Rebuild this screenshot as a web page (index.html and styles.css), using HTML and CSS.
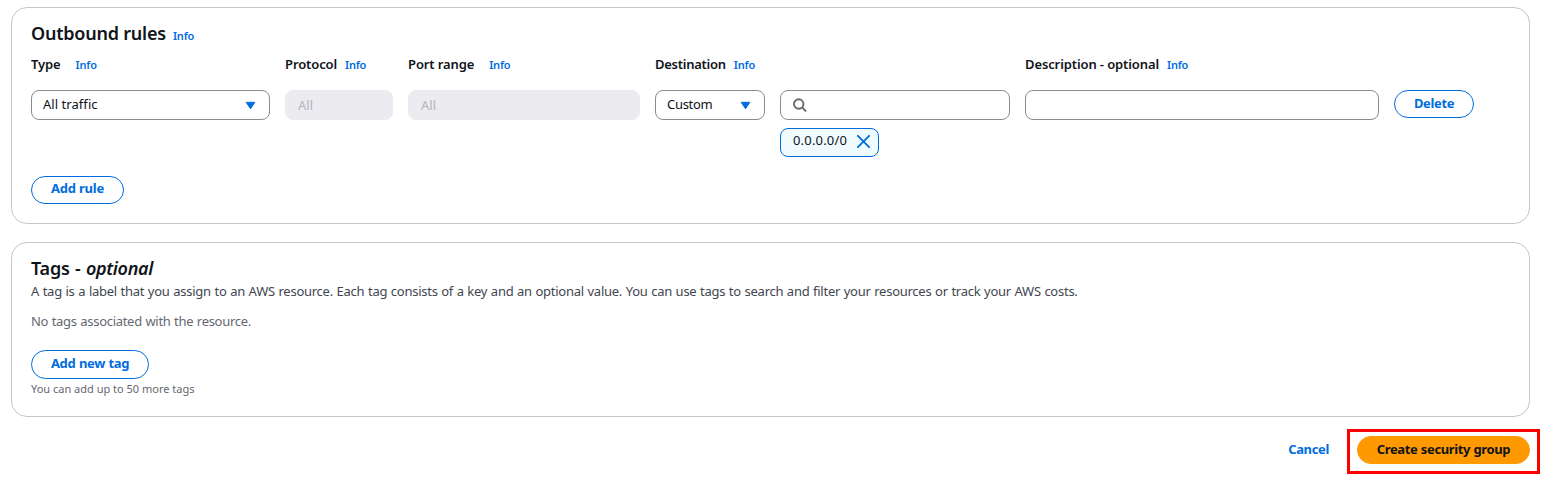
FILE: index.html
```
<!DOCTYPE html>
<html lang="en">
<head>
<meta charset="utf-8">
<title>Create security group</title>
<link rel="stylesheet" href="styles.css">
</head>
<body>
<main class="page">
  <section class="card rules">
    <header class="card-header">
      <h2 class="title">Outbound rules</h2>
      <a class="info">Info</a>
    </header>
    <div class="grid labels">
      <div class="label wide"><span>Type</span><a class="info">Info</a></div>
      <div class="label"><span>Protocol</span><a class="info">Info</a></div>
      <div class="label wide"><span>Port range</span><a class="info">Info</a></div>
      <div class="label span"><span>Destination</span><a class="info">Info</a></div>
      <div class="label"><span>Description - optional</span><a class="info">Info</a></div>
    </div>
    <div class="grid fields">
      <div class="field select"><span class="v-traffic">All traffic</span><svg class="caret" viewBox="0 0 11 9"><path d="M1.2 1.3h8.6L5.5 7.7z"/></svg></div>
      <div class="field disabled"><span>All</span></div>
      <div class="field disabled"><span>All</span></div>
      <div class="field select"><span class="v-custom">Custom</span><svg class="caret" viewBox="0 0 11 9"><path d="M1.2 1.3h8.6L5.5 7.7z"/></svg></div>
      <div class="destination">
        <div class="field search"><svg class="glass" viewBox="0 0 14 14"><circle cx="5.7" cy="6" r="4.7"/><path d="M9.1 9.4l4 4"/></svg></div>
        <div class="token"><span class="v-cidr">0.0.0.0/0</span><svg class="close" viewBox="0 0 12 12"><path d="M.8.8l10.4 10.4M11.2.8L.8 11.2"/></svg></div>
      </div>
      <div class="field"></div>
      <button class="button delete"><span>Delete</span></button>
    </div>
    <button class="button add-rule"><span>Add rule</span></button>
  </section>
  <section class="card tags">
    <h2 class="title tags-title">Tags - <em>optional</em></h2>
    <p class="description">A tag is a label that you assign to an AWS resource. Each tag consists of a key and an optional value. You can use tags to search and filter your resources or track your AWS costs.</p>
    <p class="empty">No tags associated with the resource.</p>
    <button class="button add-tag"><span>Add new tag</span></button>
    <p class="hint">You can add up to 50 more tags</p>
  </section>
  <footer class="actions">
    <a class="cancel">Cancel</a>
    <div class="highlight"><button class="button primary"><span>Create security group</span></button></div>
  </footer>
</main>
</body>
</html>
```
FILE: styles.css
```
* { box-sizing: border-box; }
body {
  margin: 0;
  background: #fff;
  color: #0f141a;
  font: 13px/20px "Noto Sans", "Open Sans", sans-serif;
}
h2, p { margin: 0; }
span, a, h2, p { white-space: nowrap; }
.page { width: 1549px; height: 486px; padding: 7px 9px 0 11px; overflow: hidden; }
.card { width: 1519px; border: 1px solid #c6c6cd; border-radius: 16px; padding: 0 19px; }
.rules { height: 217px; padding-top: 13px; }
.tags { height: 175px; margin-top: 18px; padding-top: 13px; }
.card-header { display: flex; align-items: baseline; gap: 7px; height: 24px; }
.title { font-size: 18px; line-height: 24px; font-weight: 600; letter-spacing: -0.22px; }
.tags-title { height: 25px; word-spacing: 1px; }
.title em { letter-spacing: -0.35px; }
.info { color: #006ce0; font-size: 11px; line-height: 16px; font-weight: 600; letter-spacing: -0.2px; }
.grid { display: grid; grid-template-columns: 239px 108px 232px 110px 230px 354px 80px; column-gap: 15px; align-items: start; }
.labels { margin-top: 9px; height: 20px; }
.label { display: flex; align-items: baseline; gap: 8px; font-weight: 600; letter-spacing: -0.11px; }
.label.wide { gap: 15px; }
.label.span { grid-column: span 2; letter-spacing: -0.26px; }
.fields { margin-top: 16px; height: 67px; }
.field { height: 30px; border: 1px solid #8c8c94; border-radius: 8px; padding: 0 11px; display: flex; align-items: center; }
.field span { line-height: 28px; }
.select { justify-content: space-between; padding-right: 13px; }
.select span { margin-top: -2px; }
.v-traffic { letter-spacing: 0.05px; }
.v-custom { letter-spacing: -0.3px; }
.disabled { background: #ebebf0; border-color: #ebebf0; color: #b4b4bb; padding-left: 12px; }
.caret { width: 11px; height: 9px; fill: #006ce0; stroke: #006ce0; stroke-width: 1; stroke-linejoin: round; }
.destination { display: grid; row-gap: 8px; justify-items: start; }
.search { width: 100%; }
.glass { width: 14px; height: 14px; margin-left: 1px; fill: none; stroke: #656871; stroke-width: 1.9; }
.token { display: flex; align-items: center; justify-content: space-between; width: 99px; height: 29px; padding: 0 8px 2px 12px; border: 1px solid #006ce0; border-radius: 8px; background: #f0fbff; }
.v-cidr { margin-top: -3px; letter-spacing: 0.18px; }
.close { width: 13px; height: 13px; fill: none; stroke: #006ce0; stroke-width: 1.7; stroke-linecap: round; }
.button { display: flex; align-items: center; justify-content: center; height: 28px; padding: 0 0 3px; border: 1px solid #006ce0; border-radius: 20px; background: #fff; color: #006ce0; font: 700 13px/20px "Noto Sans", "Open Sans", sans-serif; letter-spacing: -0.2px; }
.delete { letter-spacing: -0.35px; }
.add-rule { width: 93px; margin-top: 19px; padding-bottom: 4px; }
.add-tag { width: 118px; height: 29px; margin-top: 19px; padding-bottom: 4px; letter-spacing: -0.35px; word-spacing: 0.5px; }
.description { color: #424650; letter-spacing: -0.255px; word-spacing: 0.5px; }
.empty { margin-top: 10px; color: #656871; letter-spacing: -0.3px; word-spacing: 0.5px; }
.hint { margin-top: 2px; color: #656871; font-size: 11px; line-height: 16px; }
.actions { display: flex; justify-content: flex-end; align-items: flex-start; gap: 18px; margin-top: 12px; }
.cancel { margin-top: 10px; color: #006ce0; font-weight: 700; letter-spacing: -0.35px; }
.highlight { width: 193px; height: 45px; padding: 4px 7px; border: 3px solid #f00; }
.primary { width: 173px; background: #f90; border-color: #f90; color: #0f141a; letter-spacing: -0.38px; word-spacing: 0.5px; }
```
